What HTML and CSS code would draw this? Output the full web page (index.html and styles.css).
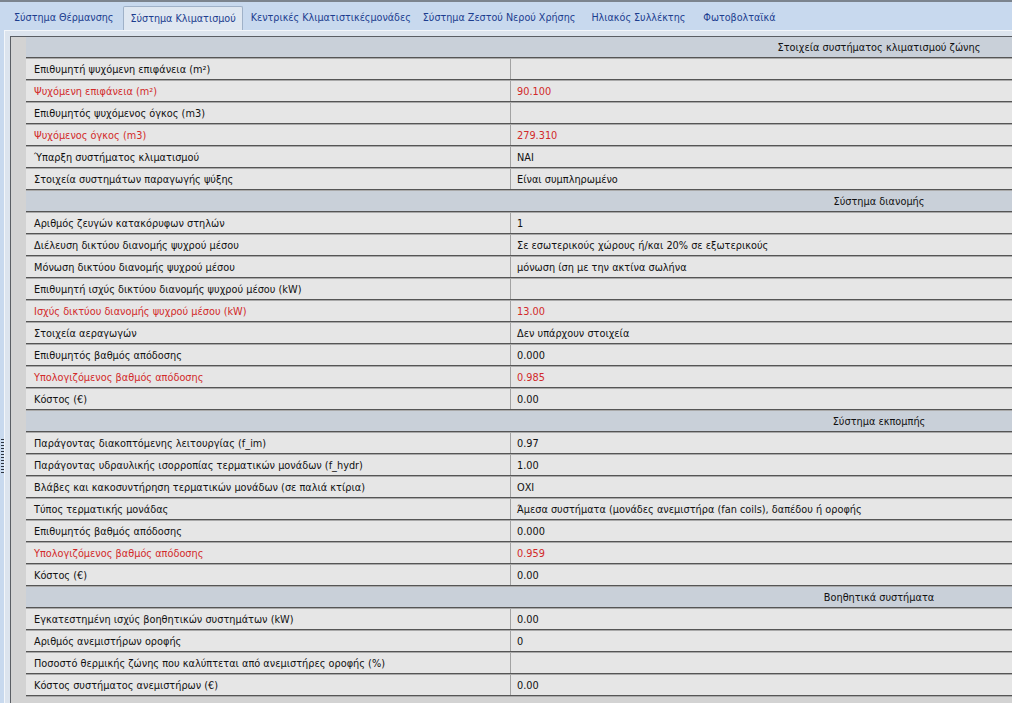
FILE: index.html
```html
<!DOCTYPE html>
<html lang="el">
<head>
<meta charset="utf-8">
<title>Σύστημα Κλιματισμού</title>
<link rel="stylesheet" href="styles.css">
</head>
<body>
<div class="topline"></div>
<nav class="tabs">
  <div class="tab t1">Σύστημα Θέρμανσης</div>
  <div class="tab t2 active">Σύστημα Κλιματισμού</div>
  <div class="tab t3">Κεντρικές Κλιματιστικέςμονάδες</div>
  <div class="tab t4">Σύστημα Ζεστού Νερού Χρήσης</div>
  <div class="tab t5">Ηλιακός Συλλέκτης</div>
  <div class="tab t6">Φωτοβολταϊκά</div>
</nav>
<div class="panel">
  <div class="grip"></div>
  <div class="inner">
    <div class="grid">
      <div class="head"><span></span><span class="htext">Στοιχεία συστήματος κλιματισμού ζώνης</span></div>
      <div class="row"><span class="k">Επιθυμητή ψυχόμενη επιφάνεια (m²)</span><span class="v"></span></div>
      <div class="row red"><span class="k">Ψυχόμενη επιφάνεια (m²)</span><span class="v">90.100</span></div>
      <div class="row"><span class="k">Επιθυμητός ψυχόμενος όγκος (m3)</span><span class="v"></span></div>
      <div class="row red"><span class="k">Ψυχόμενος όγκος (m3)</span><span class="v">279.310</span></div>
      <div class="row"><span class="k">Ύπαρξη συστήματος κλιματισμού</span><span class="v">ΝΑΙ</span></div>
      <div class="row"><span class="k">Στοιχεία συστημάτων παραγωγής ψύξης</span><span class="v">Είναι συμπληρωμένο</span></div>

      <div class="head"><span></span><span class="htext">Σύστημα διανομής</span></div>
      <div class="row"><span class="k">Αριθμός ζευγών κατακόρυφων στηλών</span><span class="v">1</span></div>
      <div class="row"><span class="k">Διέλευση δικτύου διανομής ψυχρού μέσου</span><span class="v">Σε εσωτερικούς χώρους ή/και 20% σε εξωτερικούς</span></div>
      <div class="row"><span class="k">Μόνωση δικτύου διανομής ψυχρού μέσου</span><span class="v">μόνωση ίση με την ακτίνα σωλήνα</span></div>
      <div class="row"><span class="k">Επιθυμητή ισχύς δικτύου διανομής ψυχρού μέσου (kW)</span><span class="v"></span></div>
      <div class="row red"><span class="k">Ισχύς δικτύου διανομής ψυχρού μέσου (kW)</span><span class="v">13.00</span></div>
      <div class="row"><span class="k">Στοιχεία αεραγωγών</span><span class="v">Δεν υπάρχουν στοιχεία</span></div>
      <div class="row"><span class="k">Επιθυμητός βαθμός απόδοσης</span><span class="v">0.000</span></div>
      <div class="row red"><span class="k">Υπολογιζόμενος βαθμός απόδοσης</span><span class="v">0.985</span></div>
      <div class="row"><span class="k">Κόστος (€)</span><span class="v">0.00</span></div>

      <div class="head"><span></span><span class="htext">Σύστημα εκπομπής</span></div>
      <div class="row"><span class="k">Παράγοντας διακοπτόμενης λειτουργίας (f_im)</span><span class="v">0.97</span></div>
      <div class="row"><span class="k">Παράγοντας υδραυλικής ισορροπίας τερματικών μονάδων (f_hydr)</span><span class="v">1.00</span></div>
      <div class="row"><span class="k">Βλάβες και κακοσυντήρηση τερματικών μονάδων (σε παλιά κτίρια)</span><span class="v">ΟΧΙ</span></div>
      <div class="row"><span class="k">Τύπος τερματικής μονάδας</span><span class="v">Άμεσα συστήματα (μονάδες ανεμιστήρα (fan coils), δαπέδου ή οροφής</span></div>
      <div class="row"><span class="k">Επιθυμητός βαθμός απόδοσης</span><span class="v">0.000</span></div>
      <div class="row red"><span class="k">Υπολογιζόμενος βαθμός απόδοσης</span><span class="v">0.959</span></div>
      <div class="row"><span class="k">Κόστος (€)</span><span class="v">0.00</span></div>

      <div class="head"><span></span><span class="htext">Βοηθητικά συστήματα</span></div>
      <div class="row"><span class="k">Εγκατεστημένη ισχύς βοηθητικών συστημάτων (kW)</span><span class="v">0.00</span></div>
      <div class="row"><span class="k">Αριθμός ανεμιστήρων οροφής</span><span class="v">0</span></div>
      <div class="row"><span class="k">Ποσοστό θερμικής ζώνης που καλύπτεται από ανεμιστήρες οροφής (%)</span><span class="v"></span></div>
      <div class="row"><span class="k">Κόστος συστήματος ανεμιστήρων (€)</span><span class="v">0.00</span></div>
    </div>
  </div>
</div>
</body>
</html>
```
FILE: styles.css
```css
html, body {
  margin: 0;
  padding: 0;
  height: 100%;
  overflow: hidden;
}
body {
  background: #c8d9ee;
  font-family: "DejaVu Sans", "Liberation Sans", sans-serif;
  font-size: 9.75px;
  color: #111;
  display: flex;
  flex-direction: column;
}
.topline {
  height: 2px;
  background: #7c848e;
  flex: none;
}
.tabs {
  flex: none;
  height: 28px;
  display: flex;
  align-items: flex-end;
  padding-left: 8px;
}
.tab {
  height: 24px;
  line-height: 24px;
  padding: 0 6px;
  color: #1c3d8f;
  box-sizing: border-box;
  white-space: nowrap;
  font-size: 9.6px;
}
.tab.t1 { margin-right: 4px; }
.tab.t3 { margin-left: 2px; margin-right: 0; }
.tab.t4 { margin-right: 4px; }
.tab.t5 { margin-right: 6px; }
.tab.active {
  background: #dfe7f1;
  border: 1px solid #9fb1c8;
  border-bottom: none;
  border-radius: 2px 2px 0 0;
  line-height: 23px;
}
.panel {
  flex: 1;
  position: relative;
  margin-left: 4px;
  border-left: 1px solid #f3f6fa;
  border-top: 1px solid #f3f6fa;
  background: #dce4ee;
  padding: 5px 0 0 5px;
  display: flex;
  min-height: 0;
}
.grip {
  position: absolute;
  left: -4px;
  top: 408px;
  width: 3px;
  height: 36px;
  background: repeating-linear-gradient(to bottom, #2c3440 0 1px, transparent 1px 3px);
}
.inner {
  flex: 1;
  border-top: 1px solid #5a5e64;
  border-left: 1px solid #5a5e64;
  background: #d3d3d3;
  padding-left: 15px;
  overflow: hidden;
  min-width: 0;
}
.grid {
  width: 1222px;
}
.row, .head {
  display: grid;
  grid-template-columns: 484px 738px;
  height: 22px;
  box-sizing: border-box;
  border-bottom: 2px groove #a9a9a9;
}
.row {
  background: #e6e6e6;
}
.head {
  background: #c9d0d9;
}
.row span, .head span {
  line-height: 21px;
  white-space: nowrap;
  overflow: hidden;
}
.k {
  padding-left: 8px;
}
.v {
  padding-left: 6px;
  border-left: 1px solid #a2a2a2;
}
.htext {
  text-align: center;
}
.row.red span {
  color: #d22a2a;
}
```
